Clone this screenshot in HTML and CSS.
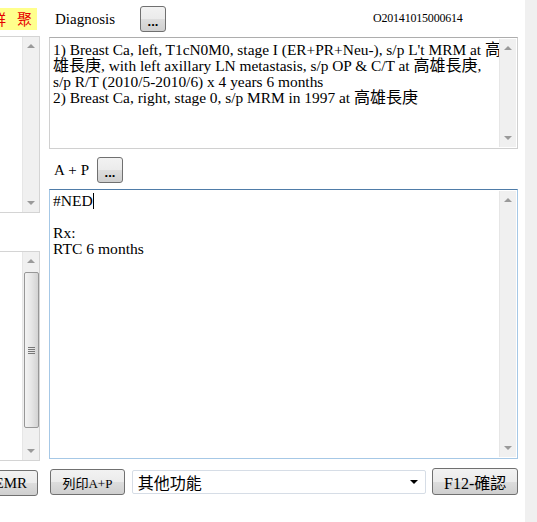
FILE: index.html
```html
<!DOCTYPE html>
<html>
<head>
<meta charset="utf-8">
<link rel="stylesheet" href="styles.css">
</head>
<body>
<div class="app">
  <div class="left">
    <div class="tag"><span>群</span><span>聚</span></div>
    <div class="list list1">
      <div class="vscroll">
        <span class="arr up"></span>
        <span class="arr down"></span>
      </div>
    </div>
    <div class="list list2">
      <div class="vscroll">
        <span class="arr up"></span>
        <div class="thumb"><span class="grip"></span></div>
        <span class="arr down"></span>
      </div>
    </div>
    <button class="btn emr">EMR</button>
  </div>

  <div class="main">
    <div class="head">
      <span class="label dx">Diagnosis</span>
      <button class="btn dots">...</button>
      <span class="id">O20141015000614</span>
    </div>
    <div class="box box1">
      <div class="txt">1) Breast Ca, left, T1cN0M0, stage I (ER+PR+Neu-), s/p L't MRM at <span class="cj">高</span>
<span class="cj">雄長庚</span>, with left axillary LN metastasis, s/p OP &amp; C/T at <span class="cj">高雄長庚</span>,
s/p R/T (2010/5-2010/6) x 4 years 6 months
2) Breast Ca, right, stage 0, s/p MRM in 1997 at <span class="cj">高雄長庚</span></div>
      <div class="vscroll">
        <span class="arr up"></span>
        <span class="arr down"></span>
      </div>
    </div>
    <div class="head2">
      <span class="label ap">A + P</span>
      <button class="btn dots">...</button>
    </div>
    <div class="box box2">
      <div class="txt">#NED<span class="caret"></span>

Rx:
RTC 6 months</div>
      <div class="vscroll">
        <span class="arr up"></span>
        <span class="arr down"></span>
      </div>
    </div>
    <div class="foot">
      <button class="btn print">列印A+P</button>
      <div class="select"><span>其他功能</span><span class="sarr"></span></div>
      <button class="btn ok">F12-確認</button>
    </div>
  </div>
  <div class="strip"></div>
</div>
</body>
</html>
```

FILE: styles.css
```css
html, body {
  margin: 0;
  padding: 0;
  background: #fff;
}
body {
  width: 537px;
  height: 522px;
  overflow: hidden;
  font-family: "Liberation Serif", "Noto Sans CJK TC", serif;
  color: #000;
}
.app {
  display: flex;
  height: 522px;
}
.left {
  width: 40px;
  flex: none;
  display: flex;
  flex-direction: column;
  overflow: hidden;
}
.tag {
  margin-top: 8px;
  width: 37px;
  height: 22px;
  background: #ffff8c;
  color: #e60000;
  font-size: 15px;
  line-height: 22px;
  display: flex;
  justify-content: flex-end;
  gap: 11px;
  padding-right: 5px;
  box-sizing: border-box;
  overflow: hidden;
  white-space: nowrap;
  font-family: "Noto Sans CJK TC", sans-serif;
}
.tag span { flex: none; }
.list {
  position: relative;
  box-sizing: border-box;
  width: 40px;
  border: 1px solid #d4d4d4;
  border-left: none;
  display: flex;
  justify-content: flex-end;
}
.list1 {
  margin-top: 6px;
  height: 177px;
}
.list2 {
  margin-top: 38px;
  height: 210px;
}
.vscroll {
  position: relative;
  width: 17px;
  flex: none;
  background: #f0f0f0;
  border-left: 1px solid #e6e6e6;
  box-sizing: border-box;
  display: flex;
  flex-direction: column;
  justify-content: space-between;
  align-items: center;
  padding: 7px 0 7px;
}
.arr {
  width: 0;
  height: 0;
  border-left: 4px solid transparent;
  border-right: 4px solid transparent;
}
.arr.up { border-bottom: 4px solid #9a9a9a; }
.arr.down { border-top: 4px solid #9a9a9a; }
.list2 .vscroll { justify-content: flex-start; }
.list2 .arr.down { margin-top: auto; }
.thumb {
  margin-top: 9px;
  width: 15px;
  height: 156px;
  box-sizing: border-box;
  border: 1px solid #979797;
  border-radius: 2px;
  background: linear-gradient(to right, #f3f3f3, #e6e6e6 50%, #d3d3d3);
  display: flex;
  align-items: center;
  justify-content: center;
}
.grip {
  width: 7px;
  height: 7px;
  background: repeating-linear-gradient(to bottom, #777 0 1px, transparent 1px 2px);
}
.btn {
  box-sizing: border-box;
  border: 1px solid #707070;
  border-radius: 3px;
  background: linear-gradient(to bottom, #f2f2f2 0%, #ebebeb 50%, #dddddd 51%, #cfcfcf 100%);
  font-family: "Liberation Serif", "Noto Sans CJK TC", serif;
  color: #000;
  padding: 0;
  margin: 0;
  display: flex;
  align-items: center;
  justify-content: center;
  white-space: nowrap;
}
.emr {
  margin-top: 9px;
  margin-left: -22px;
  width: 60px;
  height: 26px;
  font-size: 15px;
  flex: none;
  justify-content: flex-end;
  padding-right: 10px;
}
.main {
  margin-left: 9px;
  width: 469px;
  flex: none;
  display: flex;
  flex-direction: column;
}
.head {
  height: 37px;
  display: flex;
  align-items: center;
}
.label {
  font-size: 15px;
  padding-left: 6px;
  box-sizing: border-box;
}
.dx {
  width: 91px;
  padding-top: 1px;
}
.dots {
  width: 26px;
  height: 26px;
  font-size: 13px;
  font-weight: bold;
  font-family: "Liberation Sans", sans-serif;
  padding-top: 6px;
}
.id {
  margin-left: 207px;
  font-size: 12px;
  letter-spacing: -0.2px;
}
.box {
  box-sizing: border-box;
  display: flex;
  border: 1px solid #d0d0d0;
  border-top-color: #adadad;
}
.box1 {
  height: 112px;
}
.box2 {
  height: 270px;
  border-color: #a6c8e6;
  border-top-color: #4f7ca8;
}
.txt {
  flex: 1;
  white-space: pre;
  font-size: 15.4px;
  line-height: 16px;
  padding: 4px 0 0 3px;
  overflow: hidden;
}
.cj {
  font-size: 16px;
  line-height: 8px;
  font-family: "Noto Sans CJK TC", sans-serif;
}
.box2 .txt { padding-top: 3px; font-size: 15.6px; }
.box .vscroll {
  margin: 1px 1px 1px 0;
}
.caret {
  display: inline-block;
  width: 1px;
  height: 16px;
  background: #000;
  vertical-align: -3px;
}
.head2 {
  height: 40px;
  display: flex;
  align-items: center;
}
.ap {
  width: 48px;
  padding-left: 5px;
  letter-spacing: 0.2px;
  padding-top: 2px;
}
.head2 .dots { margin-top: 1px; }
.foot {
  margin-top: 10px;
  display: flex;
  align-items: flex-start;
}
.print {
  margin-left: 1px;
  width: 75px;
  height: 26px;
  font-size: 13px;
}
.select {
  margin-left: 7px;
  margin-top: 1px;
  width: 295px;
  height: 24px;
  box-sizing: border-box;
  border: 1px solid #d6dde6;
  border-radius: 2px;
  display: flex;
  align-items: center;
  padding-left: 5px;
  font-size: 16px;
  font-family: "Noto Sans CJK TC", sans-serif;
}
.sarr {
  margin-left: auto;
  margin-right: 7px;
  width: 0;
  height: 0;
  border-left: 4px solid transparent;
  border-right: 4px solid transparent;
  border-top: 4px solid #000;
}
.ok {
  margin-left: 6px;
  width: 86px;
  height: 27px;
  font-size: 16px;
  margin-top: -1px;
}
.strip {
  margin-left: 7px;
  width: 12px;
  flex: none;
  background: #f0f0f0;
}
```
